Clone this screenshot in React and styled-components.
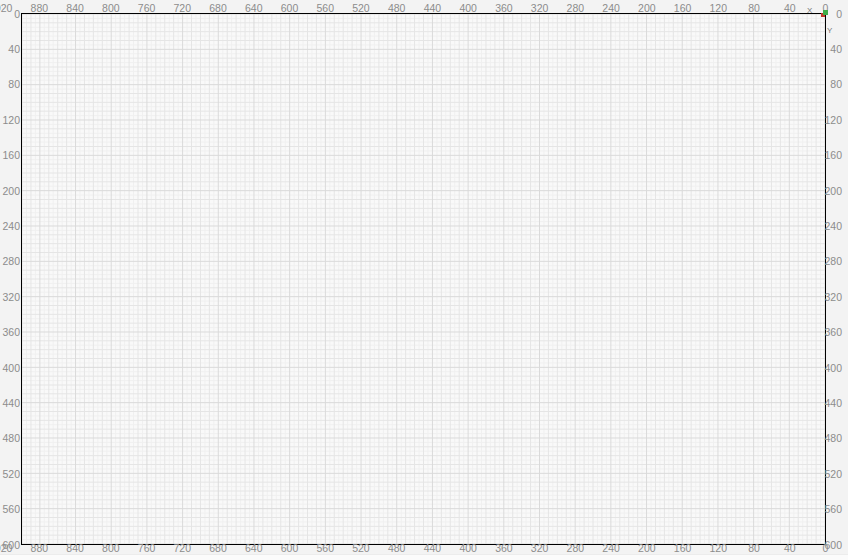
import React from 'react';
import styled, { createGlobalStyle } from 'styled-components';

const GlobalStyle = createGlobalStyle`
  html, body {
    margin: 0;
    padding: 0;
    background: #f3f3f3;
    overflow: hidden;
  }
  body {
    font-family: "Liberation Sans", Arial, sans-serif;
  }
`;

// canvas geometry: x runs 900 -> 0 from left to right, y runs 0 -> 600 downward
const X_MAX = 900;
const Y_MAX = 600;
const SX = 804 / X_MAX;
const SY = 531 / Y_MAX;

const Workspace = styled.div`
  position: relative;
  width: 848px;
  height: 560px;
  display: grid;
  grid-template-columns: 21px 805px 22px;
  grid-template-rows: 13px 532px 9px 6px;
  grid-template-areas:
    "c1 top c2"
    "left canvas right"
    "c3 bottom c4"
    "status status status";
  background: #f3f3f3;
  overflow: hidden;
`;

const Canvas = styled.div`
  grid-area: canvas;
  position: relative;
  border: 1px solid #000;
  background: #f9f9f9;
  overflow: hidden;

  svg {
    display: block;
    width: 100%;
    height: 100%;
  }
`;

const Ruler = styled.div`
  grid-area: ${(p) => p.$area};
  position: relative;
  z-index: 2;
`;

const Tick = styled.span`
  position: absolute;
  font-size: 10.5px;
  line-height: 1;
  color: #8c8c8c;
  white-space: nowrap;
  transform: ${(p) => (p.$vertical ? 'translateY(-50%)' : 'translateX(-50%)')};
`;

const StatusStrip = styled.div`
  grid-area: status;
  background: #fbfbfb;
  border-top: 1px solid #ececec;
`;

const AxisLetter = styled.span`
  position: absolute;
  font-size: 8px;
  line-height: 1;
  color: #777;
`;

const OriginDot = styled.span`
  position: absolute;
  width: ${(p) => p.$size}px;
  height: ${(p) => p.$size}px;
  background: ${(p) => p.$color};
`;

const Origin = styled.div`
  position: absolute;
  left: 805px;
  top: 5px;
  width: 30px;
  height: 30px;
  z-index: 3;
`;

const xValues = [];
for (let v = 920; v >= 0; v -= 40) xValues.push(v);
const yValues = [];
for (let v = 0; v <= 600; v += 40) yValues.push(v);

const lineColor = (v) => {
  if (v % 40 === 0) return '#dadada';
  if (v % 10 === 0) return '#e5e5e5';
  return '#f0f0f0';
};

const stepOf = (v) => (v % 40 === 0 ? 40 : v % 10 === 0 ? 10 : 5);

const GridLines = () => {
  const lines = [];
  [5, 10, 40].forEach((step) => {
    for (let v = 0; v <= X_MAX; v += 5) {
      if (stepOf(v) !== step) continue;
      const x = X_MAX - v;
      lines.push(
        <line key={`x${v}`} x1={x} y1={0} x2={x} y2={Y_MAX} stroke={lineColor(v)} vectorEffect="non-scaling-stroke" />
      );
    }
    for (let v = 0; v <= Y_MAX; v += 5) {
      if (stepOf(v) !== step) continue;
      lines.push(
        <line key={`y${v}`} x1={0} y1={v} x2={X_MAX} y2={v} stroke={lineColor(v)} vectorEffect="non-scaling-stroke" />
      );
    }
  });
  return (
    <svg viewBox={`0 0 ${X_MAX} ${Y_MAX}`} preserveAspectRatio="none">
      <g strokeWidth="1" shapeRendering="crispEdges">
        {lines}
      </g>
    </svg>
  );
};

// tick positions relative to each ruler cell
const xLeft = (v) => 804.5 - v * SX; // ruler cell starts at x = 21
const yTop = (v) => 0.5 + v * SY; // ruler cell starts at y = 13

export default function App() {
  return (
    <>
      <GlobalStyle />
      <Workspace>
        <Ruler $area="top">
          {xValues.map((v) => (
            <Tick key={v} style={{ left: xLeft(v), top: 3 }}>
              {v}
            </Tick>
          ))}
        </Ruler>
        <Ruler $area="bottom">
          {xValues.map((v) => (
            <Tick key={v} style={{ left: xLeft(v), top: -2 }}>
              {v}
            </Tick>
          ))}
        </Ruler>
        <Ruler $area="left">
          {yValues.map((v) => (
            <Tick key={v} $vertical style={{ right: 1, top: yTop(v) }}>
              {v}
            </Tick>
          ))}
        </Ruler>
        <Ruler $area="right">
          {yValues.map((v) => (
            <Tick key={v} $vertical style={{ right: 6, top: yTop(v) }}>
              {v}
            </Tick>
          ))}
        </Ruler>
        <Canvas>
          <GridLines />
        </Canvas>
        <StatusStrip />
        <Origin>
          <AxisLetter style={{ left: 2, top: 2 }}>X</AxisLetter>
          <OriginDot $size={4} $color="#c0392b" style={{ left: 16, top: 8 }} />
          <OriginDot $size={5} $color="#3fae49" style={{ left: 18, top: 5 }} />
          <AxisLetter style={{ left: 22, top: 22 }}>Y</AxisLetter>
        </Origin>
      </Workspace>
    </>
  );
}
